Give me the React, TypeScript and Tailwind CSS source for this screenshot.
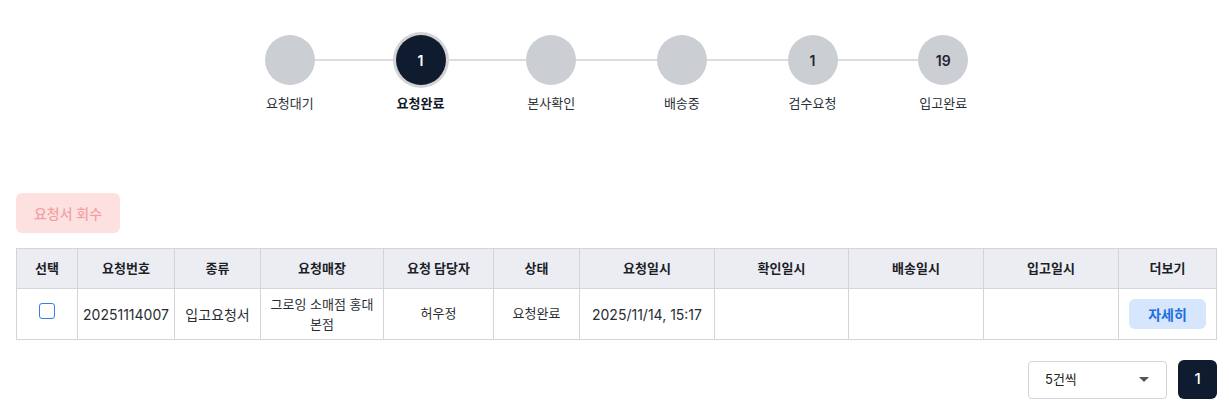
import React from "react";

const STEPS = [
  { label: "요청대기", count: null as number | null },
  { label: "요청완료", count: 1 },
  { label: "본사확인", count: null },
  { label: "배송중", count: null },
  { label: "검수요청", count: 1 },
  { label: "입고완료", count: 19 },
];

const ACTIVE = 1;

const COLUMNS = [
  { title: "선택", w: "w-[61px]" },
  { title: "요청번호", w: "w-[97px]" },
  { title: "종류", w: "w-[86px]" },
  { title: "요청매장", w: "w-[123px]" },
  { title: "요청 담당자", w: "w-[110px]" },
  { title: "상태", w: "w-[86px]" },
  { title: "요청일시", w: "w-[135px]" },
  { title: "확인일시", w: "w-[134px]" },
  { title: "배송일시", w: "w-[135px]" },
  { title: "입고일시", w: "w-[135px]" },
  { title: "더보기", w: "w-[98px]" },
];

function Stepper() {
  return (
    <div className="mx-auto flex w-[784px]">
      {STEPS.map((s, i) => {
        const active = i === ACTIVE;
        return (
          <div key={s.label} className="flex flex-1 flex-col items-center">
            <div className="flex w-full items-center">
              <div className={`h-[2px] flex-1 ${i === 0 ? "bg-transparent" : "bg-[#dcdcdf]"}`} />
              <div
                className={`flex h-[50px] w-[50px] items-center justify-center rounded-full text-[14px] font-semibold ${
                  active
                    ? "bg-[#0f1b2e] text-white ring-[3px] ring-[#d3d3d5]"
                    : "bg-[#cbced3] text-[#1f2430]"
                }`}
              >
                {s.count ?? ""}
              </div>
              <div className={`h-[2px] flex-1 ${i === STEPS.length - 1 ? "bg-transparent" : "bg-[#dcdcdf]"}`} />
            </div>
            <span
              className={`mt-[9px] text-[13px] leading-[18px] ${
                active ? "font-bold text-[#111827]" : "text-[#2b2f38]"
              }`}
            >
              {s.label}
            </span>
          </div>
        );
      })}
    </div>
  );
}

export default function App() {
  return (
    <div
      className="min-h-[419px] bg-white pl-4 pr-3 pt-[35px] text-[#222]"
      style={{ fontFamily: "Inter, 'Noto Sans CJK KR', sans-serif" }}
    >
      <Stepper />

      <button
        type="button"
        className="mt-[81px] h-10 w-[104px] rounded-md bg-[#fde1e1] text-[14px] font-medium text-[#f2a0a3]"
      >
        요청서 회수
      </button>

      <table className="mt-[15px] w-[1201px] table-fixed border-collapse text-[14px]">
        <thead>
          <tr className="h-10 bg-[#ececf3]">
            {COLUMNS.map((c) => (
              <th
                key={c.title}
                className={`${c.w} border border-[#d4d5db] text-center text-[13px] font-bold text-[#1c1f26]`}
              >
                {c.title}
              </th>
            ))}
          </tr>
        </thead>
        <tbody>
          <tr className="h-[51px] text-[#2a2d33]">
            <td className="border border-[#d4d5db] text-center">
              <input
                type="checkbox"
                className="mx-auto mb-[6px] block h-4 w-4 appearance-none rounded-[3px] border border-[#3b7be8] bg-white"
              />
            </td>
            <td className="border border-[#d4d5db] text-center">20251114007</td>
            <td className="border border-[#d4d5db] text-center">입고요청서</td>
            <td className="border border-[#d4d5db] px-2 text-center text-[13px] leading-5">
              그로잉 소매점 홍대 본점
            </td>
            <td className="border border-[#d4d5db] text-center text-[13px]">허우정</td>
            <td className="border border-[#d4d5db] text-center text-[13px]">요청완료</td>
            <td className="border border-[#d4d5db] text-center">2025/11/14, 15:17</td>
            <td className="border border-[#d4d5db]" />
            <td className="border border-[#d4d5db]" />
            <td className="border border-[#d4d5db]" />
            <td className="border border-[#d4d5db] text-center">
              <button
                type="button"
                className="h-[30px] w-[77px] rounded-md bg-[#d5e6fd] text-[14px] font-semibold text-[#1d6ee0]"
              >
                자세히
              </button>
            </td>
          </tr>
        </tbody>
      </table>

      <div className="mt-5 flex w-[1201px] items-center justify-end gap-[11px]">
        <div className="flex h-[38px] w-[139px] items-center justify-between rounded-[4px] border border-[#d1d3d8] pl-4 pr-[17px] text-[13px] text-[#222]">
          <span>5건씩</span>
          <svg width="10" height="5" viewBox="0 0 10 5">
            <path d="M0 0h10L5 5z" fill="#555" />
          </svg>
        </div>
        <button
          type="button"
          className="h-[39px] w-[39px] rounded-md bg-[#0f1b2e] text-[15px] font-medium text-white"
        >
          1
        </button>
      </div>
    </div>
  );
}
